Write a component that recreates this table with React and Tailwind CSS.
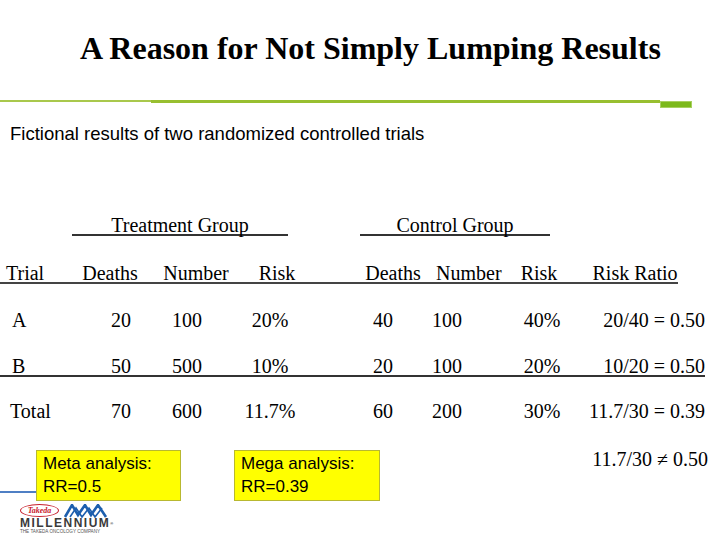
import React from "react";

const serif = "font-['Liberation_Serif','Times_New_Roman',serif]";
const sans = "font-['Liberation_Sans',Arial,sans-serif]";

const headCols = [
  { w: "w-[70px]", cls: "text-left pl-[6px]" },
  { w: "w-[80px]", cls: "text-center" },
  { w: "w-[92px]", cls: "text-center" },
  { w: "w-[70px]", cls: "text-center" },
  { w: "w-[38px]", cls: "" },
  { w: "w-[86px]", cls: "text-center" },
  { w: "w-[64px]", cls: "text-center" },
  { w: "w-[78px]", cls: "text-center" },
  { w: "w-[14px]", cls: "" },
  { w: "w-[86px]", cls: "text-center" },
];

const dataCols = [
  { w: "w-[100px]", cls: "text-left pl-[12px]" },
  { w: "w-[42px]", cls: "text-center" },
  { w: "w-[90px]", cls: "text-center" },
  { w: "w-[76px]", cls: "text-center" },
  { w: "w-[50px]", cls: "" },
  { w: "w-[50px]", cls: "text-center" },
  { w: "w-[78px]", cls: "text-center" },
  { w: "w-[112px]", cls: "text-center" },
  { w: "w-[107px]", cls: "flex justify-end" },
];

const Cells = ({ cols, values }) =>
  cols.map((c, i) => (
    <div key={i} className={`${c.w} ${c.cls} shrink-0 whitespace-nowrap`}>
      {values[i]}
    </div>
  ));

const Logo = () => (
  <div className="pl-[20px] mt-[2px] flex flex-col">
    <div className="flex items-center gap-[4px] h-[15px]">
      <div className="w-[39px] h-[13px] rounded-[50%] border border-[#c8202e] flex items-center justify-center">
        <span className={`${serif} text-[8px] leading-[8px] italic font-bold text-[#c8202e]`}>
          Takeda
        </span>
      </div>
      <svg width="46" height="14" viewBox="0 0 46 14">
        <polyline
          points="2,13 9,1 15,11 22,1 28,11 35,1 43,13"
          fill="none"
          stroke="#1d5fae"
          strokeWidth="2.6"
          strokeLinejoin="miter"
        />
        <polyline
          points="7,13 13,4 19,13 26,4 32,13 39,4"
          fill="none"
          stroke="#1d5fae"
          strokeWidth="1.6"
        />
      </svg>
    </div>
    <div className={`${sans} text-[12px] leading-[11px] font-bold tracking-[1.5px] text-[#3a3a3a]`}>
      MILLENNIUM<sup className="text-[4px]">®</sup>
    </div>
    <div className={`${sans} text-[4.6px] leading-[6px] text-[#555]`}>
      THE TAKEDA ONCOLOGY COMPANY
    </div>
  </div>
);

const App = () => {
  return (
    <div className="w-[720px] h-[540px] bg-white overflow-hidden text-black">
      <h1 className={`${serif} pt-[30px] pl-[80px] text-[32px] leading-[36px] font-bold whitespace-nowrap`}>
        A Reason for Not Simply Lumping Results
      </h1>

      <div className="mt-[34px] flex items-start">
        <div className="w-[151px] h-[2px] bg-[#a9c84c]" />
        <div className="w-[509px] h-[3px] bg-[#98bf30]" />
        <div className="w-[32px] h-[7px] mt-[1px] bg-[#7cb91c] border border-[#a8d060]" />
      </div>

      <p className={`${sans} mt-[15px] pl-[10px] text-[18.5px] leading-[22px] whitespace-nowrap`}>
        Fictional results of two randomized controlled trials
      </p>

      <div className={`${serif} text-[20px] leading-[24px]`}>
        <div className="mt-[68px] flex">
          <div className="ml-[72px] w-[216px] h-[23px] text-center border-b-2 border-[#333]">
            Treatment Group
          </div>
          <div className="ml-[72px] w-[190px] h-[23px] text-center border-b-2 border-[#333]">
            Control Group
          </div>
        </div>

        <div className="mt-[25px] flex w-[678px] h-[23px] border-b-2 border-[#444]">
          <Cells
            cols={headCols}
            values={["Trial", "Deaths", "Number", "Risk", "", "Deaths", "Number", "Risk", "", "Risk Ratio"]}
          />
        </div>

        <div className="mt-[24px] flex h-[24px]">
          <Cells
            cols={dataCols}
            values={["A", "20", "100", "20%", "", "40", "100", "40%", "20/40 = 0.50"]}
          />
        </div>

        <div className="mt-[22px] flex w-[705px] h-[23px] border-b-2 border-[#333]">
          <Cells
            cols={dataCols}
            values={["B", "50", "500", "10%", "", "20", "100", "20%", "10/20 = 0.50"]}
          />
        </div>

        <div className="mt-[22px] flex h-[24px]">
          <Cells
            cols={[{ w: "w-[100px]", cls: "text-left pl-[10px]" }, ...dataCols.slice(1)]}
            values={["Total", "70", "600", "11.7%", "", "60", "200", "30%", "11.7/30 = 0.39"]}
          />
        </div>

        <div className="mt-[24px] flex items-start">
          <div className="w-[36px] h-[2px] mt-[44px] bg-[#4f7fc4] shrink-0" />
          <div className={`${sans} mt-[3px] w-[145px] h-[51px] shrink-0 bg-[#ffff00] border border-[#b8b830] pl-[6px] pt-[1px] text-[17px] leading-[23px]`}>
            <div>Meta analysis:</div>
            <div>RR=0.5</div>
          </div>
          <div className={`${sans} ml-[53px] mt-[3px] w-[146px] h-[51px] shrink-0 bg-[#ffff00] border border-[#b8b830] pl-[6px] pt-[1px] text-[17px] leading-[23px]`}>
            <div>Mega analysis:</div>
            <div>RR=0.39</div>
          </div>
          <div className="ml-[210px] w-[118px] text-right whitespace-nowrap shrink-0">
            11.7/30 ≠ 0.50
          </div>
        </div>
      </div>

      <Logo />
    </div>
  );
};

export default App;
